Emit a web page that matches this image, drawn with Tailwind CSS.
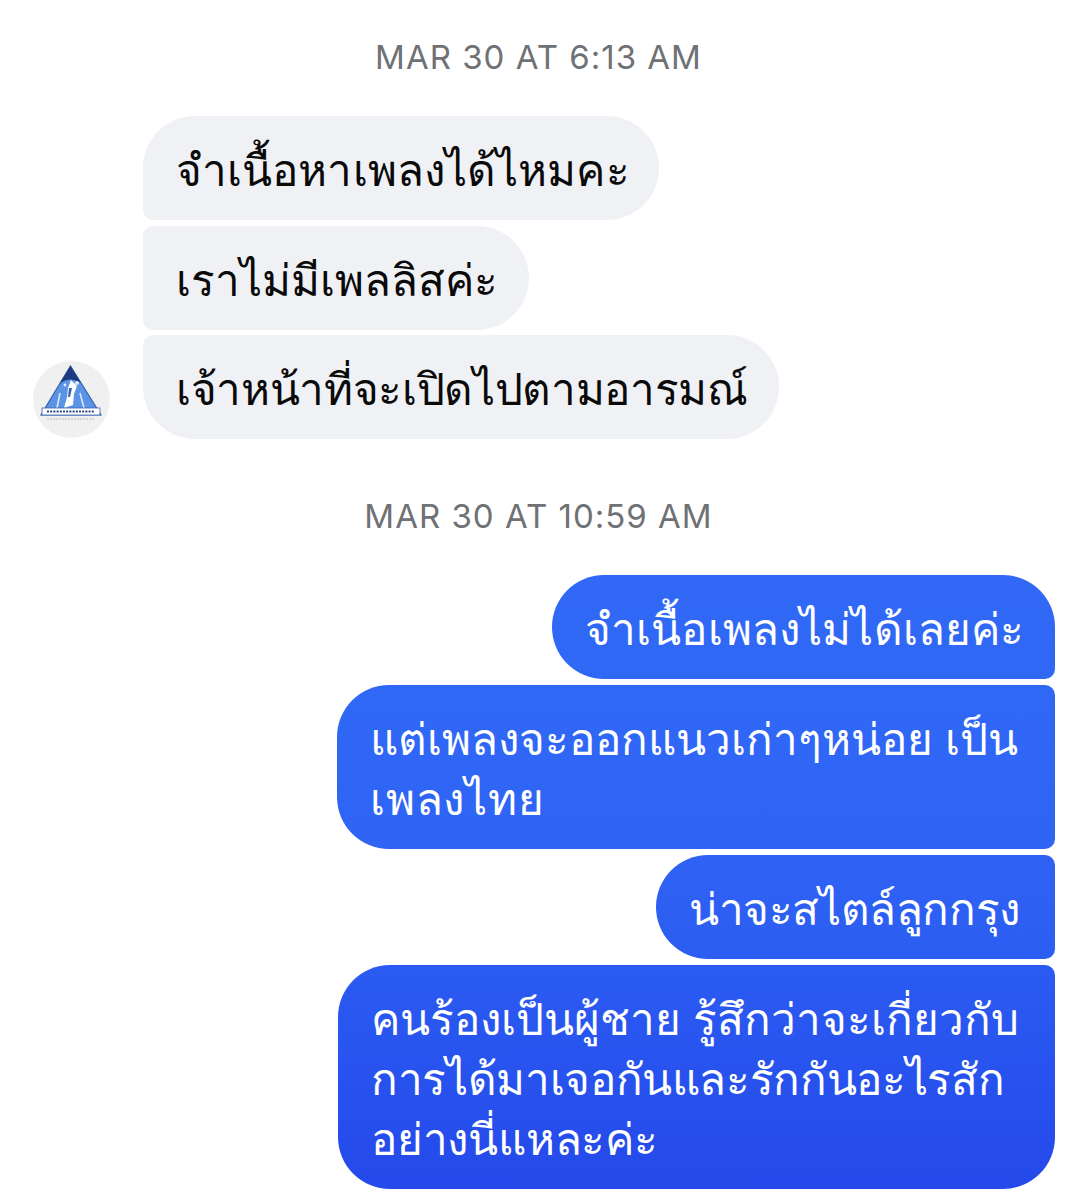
<!DOCTYPE html>
<html lang="th">
<head>
  <meta charset="UTF-8">
  <meta name="viewport" content="width=device-width, initial-scale=1.0">
  <title>Chat</title>
  <script src="https://cdn.jsdelivr.net/npm/@tailwindcss/browser@4"></script>
</head>
<body class="bg-white overflow-hidden font-['Inter','Noto_Sans',sans-serif]">
  <div class="w-[1077px] h-[1200px] flex flex-col">
    <div class="h-[116px] pt-[37px] text-center text-[33px] leading-[40px] tracking-[1px] text-[#6f7174]">MAR 30 AT 6:13 AM</div>

    <div class="flex items-end pl-[33px] gap-[33px]">
      <svg class="mb-[1px] rounded-full bg-[#f0f0f0]" width="77" height="77" viewBox="0 0 77 77">
        <path d="M37.5 5 L68 54 H8 Z" fill="#5b93e6" stroke="#3a63ad" stroke-width="1.2"/>
        <path d="M37.5 5 L48 22 Q37 15 27 22 Z" fill="#1e3a80"/>
        <circle cx="44" cy="22" r="2" fill="#e6eefb"/>
        <circle cx="32" cy="24" r="1.4" fill="#e6eefb"/>
        <path d="M38 19 L44 25 L41 33 L40 44 L31 47 L34 36 L35 27 Z" fill="#fff"/>
        <path d="M36 27 L39 27 L37 36 L35 36 Z" fill="#3a63ad"/>
        <path d="M27 32 L24 47 M47 32 L51 47" stroke="#dbe7fa" stroke-width="1.6"/>
        <rect x="9" y="47" width="58" height="7" fill="#fff" stroke="#3a63ad" stroke-width="0.8"/>
        <path d="M14 50.5 H62" stroke="#27457f" stroke-width="2" stroke-dasharray="2 1.2"/>
        <path d="M14 58 H62" stroke="#b4bdcc" stroke-width="1.2" stroke-dasharray="2 1"/>
      </svg>
      <div class="flex flex-col items-start text-[44px] leading-[60px] text-[#0a0a0a]">
        <div class="w-[516px] pl-[33px] pt-[24px] pb-[20px] whitespace-nowrap tracking-[0.1px] bg-[#f0f1f5] rounded-[52px] rounded-bl-[10px]">จำเนื้อหาเพลงได้ไหมคะ</div>
        <div class="w-[386px] mt-[6px] pl-[33px] pt-[24px] pb-[20px] whitespace-nowrap bg-[#f0f1f5] rounded-[52px] rounded-tl-[10px] rounded-bl-[10px]">เราไม่มีเพลลิสค่ะ</div>
        <div class="w-[636px] mt-[5px] pl-[33px] pt-[24px] pb-[20px] whitespace-nowrap tracking-[-0.33px] bg-[#f0f1f5] rounded-[52px] rounded-tl-[10px]">เจ้าหน้าที่จะเปิดไปตามอารมณ์</div>
      </div>
    </div>

    <div class="h-[136px] pt-[57px] text-center text-[33px] leading-[40px] tracking-[1px] text-[#6f7174]">MAR 30 AT 10:59 AM</div>

    <div class="flex flex-col items-end gap-[6px] pr-[22px] text-[44px] leading-[60px] text-white">
      <div class="w-[503px] pl-[33px] pt-[24px] pb-[20px] whitespace-nowrap tracking-[0.15px] bg-linear-to-b from-[#3169f6] to-[#3068f6] rounded-[52px] rounded-br-[10px]">จำเนื้อเพลงไม่ได้เลยค่ะ</div>
      <div class="w-[718px] pl-[33px] pt-[24px] pb-[20px] whitespace-nowrap bg-linear-to-b from-[#3068f6] to-[#2f64f5] rounded-[52px] rounded-tr-[10px] rounded-br-[10px]">แต่เพลงจะออกแนวเก่าๆหน่อย เป็น<br><span class="tracking-[0.8px]">เพลงไทย</span></div>
      <div class="w-[399px] pl-[33px] pt-[24px] pb-[20px] whitespace-nowrap tracking-[-0.4px] bg-linear-to-b from-[#2f62f4] to-[#2c5df2] rounded-[52px] rounded-tr-[10px] rounded-br-[10px]">น่าจะสไตล์ลูกกรุง</div>
      <div class="w-[717px] pl-[33px] pt-[24px] pb-[20px] whitespace-nowrap bg-linear-to-b from-[#2b5bf2] to-[#2549ea] rounded-[52px] rounded-tr-[10px]">คนร้องเป็นผู้ชาย รู้สึกว่าจะเกี่ยวกับ<br><span class="tracking-[-0.35px]">การได้มาเจอกันและรักกันอะไรสัก</span><br><span class="tracking-[-0.2px]">อย่างนี่แหละค่ะ</span></div>
    </div>
  </div>
</body>
</html>
